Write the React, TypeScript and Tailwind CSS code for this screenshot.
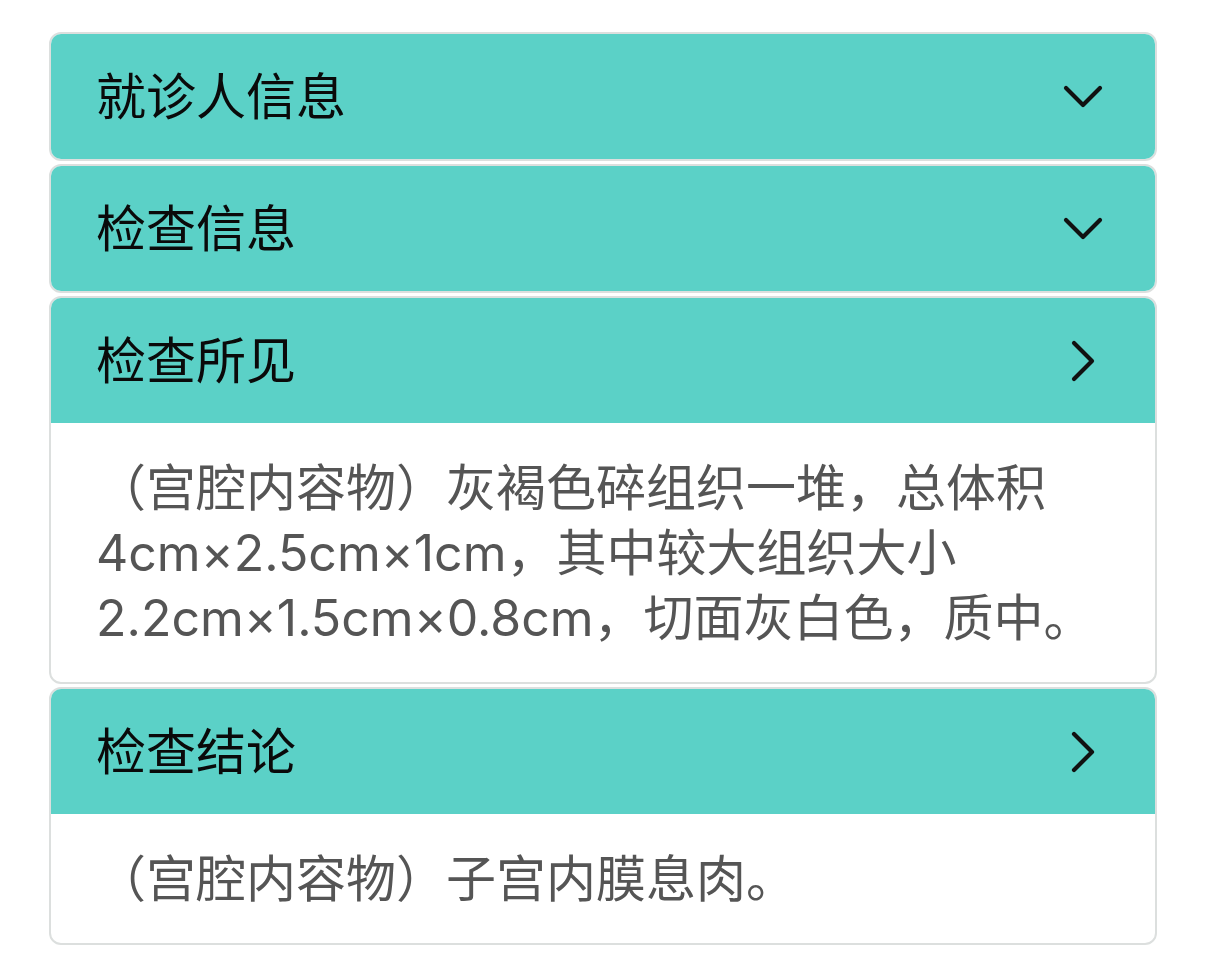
import React from 'react';

const ChevronDown = () => (
  <svg width="40" height="24" viewBox="0 0 40 24" fill="none" stroke="#111" strokeWidth="4.2" strokeLinecap="round" strokeLinejoin="round">
    <path d="M3 3 L20 20 L37 3" />
  </svg>
);

const ChevronRight = () => (
  <svg width="24" height="42" viewBox="0 0 24 42" fill="none" stroke="#111" strokeWidth="4.2" strokeLinecap="round" strokeLinejoin="round">
    <path d="M3 3 L21 21 L3 39" />
  </svg>
);

const Section = ({ title, open, children }: { title: string; open?: boolean; children?: React.ReactNode }) => (
  <div className="border-2 border-[#dcdfde] rounded-[12px] overflow-hidden bg-white">
    <div className="h-[125px] bg-[#5bd1c7] flex items-center justify-between pl-[45px] pr-[52px]">
      <span className="text-[50px] leading-none text-[#0a0a0a] font-normal">{title}</span>
      <span className="flex items-center justify-center w-[40px]">{open ? <ChevronRight /> : <ChevronDown />}</span>
    </div>
    {open && (
      <div className="px-[45px] pt-[33px] pb-[31px] text-[50px] leading-[65px] text-[#555]">{children}</div>
    )}
  </div>
);

export default function App() {
  return (
    <div
      className="min-h-screen bg-white pt-[32px] pl-[49px] pr-[48px] flex flex-col gap-[3px]"
      style={{ fontFamily: 'Inter, "Noto Sans CJK SC", sans-serif' }}
    >
      <Section title="就诊人信息" />
      <Section title="检查信息" />
      <Section title="检查所见" open>
        （宫腔内容物）灰褐色碎组织一堆，总体积
        <br />
        4cm×2.5cm×1cm，其中较大组织大小
        <br />
        2.2cm×1.5cm×0.8cm，切面灰白色，质中。
      </Section>
      <Section title="检查结论" open>
        （宫腔内容物）子宫内膜息肉。
      </Section>
    </div>
  );
}
